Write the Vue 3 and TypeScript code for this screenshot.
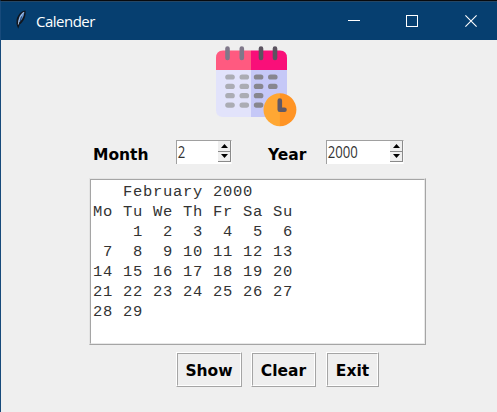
<script setup lang="ts">
import { computed, ref } from 'vue'

const month = ref(2)
const year = ref(2000)
const shown = ref({ month: 2, year: 2000 })

const names = [
  'January', 'February', 'March', 'April', 'May', 'June', 'July',
  'August', 'September', 'October', 'November', 'December',
]

const calendar = computed(() => {
  const { month: m, year: y } = shown.value
  const title = `${names[m - 1]} ${y}`
  const offset = (new Date(y, m - 1, 1).getDay() + 6) % 7
  const count = new Date(y, m, 0).getDate()
  const cells: string[] = Array(offset).fill('  ')
  for (let d = 1; d <= count; d++) cells.push(String(d).padStart(2))
  const lines = [' '.repeat(Math.floor((20 - title.length) / 2)) + title, 'Mo Tu We Th Fr Sa Su']
  for (let i = 0; i < cells.length; i += 7) lines.push(cells.slice(i, i + 7).join(' '))
  return lines.join('\n')
})

const visible = ref(true)

function show() {
  shown.value = { month: month.value, year: year.value }
  visible.value = true
}

function stepMonth(by: number) {
  month.value = Math.min(12, Math.max(1, month.value + by))
}

const columns = [25, 39.3, 53.6, 67.8]
const dots = [39, 48.4, 57.7, 67.1].flatMap((y, row) =>
  columns.slice(0, row < 2 ? 4 : 3).map((x) => ({ x, y })),
)
</script>

<template>
  <div class="window">
    <header class="titlebar">
      <svg class="feather" width="12" height="20" viewBox="0 0 12 20">
        <path d="M10.500 .5C6.500 .5 2.600 5 1.600 9.500L1.500 14L3.200 18.800L4.700 14.500C8.500 12 11.300 6.500 10.500 .5Z" fill="#10151d" />
        <path d="M9.200 1.800C6 3 3.400 7 3.200 13C6.500 11 9.300 6.500 9.200 1.800Z" fill="#6190cd" />
        <path d="M8.800 2.300C6 5 3.800 9 3.300 14.500" fill="none" stroke="#b9cbe2" stroke-width=".9" />
        <path d="M6.500 6.500L5.300 11" stroke="#173963" stroke-width=".9" />
      </svg>
      <h1 class="title">Calender</h1>
      <div class="controls">
        <svg width="12" height="12" viewBox="0 0 12 12"><path d="M0 5.500H12" stroke="#fff" /></svg>
        <svg width="12" height="12" viewBox="0 0 12 12"><rect x=".5" y=".5" width="11" height="11" fill="none" stroke="#fff" /></svg>
        <svg class="close" width="12" height="12" viewBox="0 0 12 12"><path d="M.4 .4L11.600 11.600M11.600 .4L.4 11.600" stroke="#fff" stroke-width="1.100" /></svg>
      </div>
    </header>

    <main class="body">
      <svg class="logo" width="100" height="95" viewBox="0 0 100 95">
        <path d="M11 30H46V79H18Q11 79 11 72Z" fill="#e2e3fb" />
        <path d="M46 30H82V79H46Z" fill="#c5c8f7" />
        <path d="M11 32V20Q11 12.500 18 12.500H46V32Z" fill="#ff5a80" />
        <path d="M46 12.500H75Q82 12.500 82 20V32H46Z" fill="#f90f79" />
        <g stroke-width="4.600" stroke-linecap="round">
          <path d="M22.500 10.500V20M36.800 10.500V20" stroke="#80788a" />
          <path d="M56 10.500V20M70 10.500V20" stroke="#5b5360" />
        </g>
        <rect
          v-for="(dot, i) in dots" :key="i" :x="dot.x - 4.8" :y="dot.y - 2.6"
          width="9.600" height="5.200" rx="2.600" :fill="dot.x < 45 ? '#abacb4' : '#87868f'"
        />
        <path d="M75 55.200A16.500 16.500 0 0 0 75 88.200Z" fill="#ffa733" />
        <path d="M74.900 55.200A16.500 16.500 0 0 1 74.900 88.200Z" fill="#ff9425" />
        <path d="M74.800 62.500V71.800H79.500" fill="none" stroke="#615965" stroke-width="4.600" stroke-linecap="round" stroke-linejoin="round" />
      </svg>

      <div class="fields">
        <span class="label month-label">Month</span>
        <div class="spin month-spin">
          <span class="value">{{ month }}</span>
          <div class="arrows">
            <button @click="stepMonth(1)"><svg width="7" height="4" viewBox="0 0 7 4"><path d="M0 4L3.500 0L7 4Z" /></svg></button>
            <button @click="stepMonth(-1)"><svg width="7" height="4" viewBox="0 0 7 4"><path d="M0 0L3.500 4L7 0Z" /></svg></button>
          </div>
        </div>
        <span class="label year-label">Year</span>
        <div class="spin year-spin">
          <span class="value">{{ year }}</span>
          <div class="arrows">
            <button @click="year++"><svg width="7" height="4" viewBox="0 0 7 4"><path d="M0 4L3.500 0L7 4Z" /></svg></button>
            <button @click="year--"><svg width="7" height="4" viewBox="0 0 7 4"><path d="M0 0L3.500 4L7 0Z" /></svg></button>
          </div>
        </div>
      </div>

      <div class="output"><pre>{{ visible ? calendar : '' }}</pre></div>

      <div class="actions">
        <button class="action show" @click="show"><span>Show</span></button>
        <button class="action clear" @click="visible = false"><span>Clear</span></button>
        <button class="action exit"><span>Exit</span></button>
      </div>
    </main>
  </div>
</template>

<style>
body {
  margin: 0;
  overflow: hidden;
}
</style>

<style scoped>
* {
  box-sizing: border-box;
}

.window {
  width: 497px;
  height: 412px;
  display: flex;
  flex-direction: column;
  background: #efefef;
  border-top: 1px solid #080a0d;
  border-left: 1px solid #174a7b;
}

.titlebar {
  flex: none;
  height: 39px;
  display: flex;
  align-items: center;
  padding: 0 20px 0 14px;
  background: #063f70;
  border-top: 1px solid #254765;
}

.feather {
  margin-top: -2px;
}

.title {
  margin: -1px 0 0 9px;
  font: 400 15px/20px "Open Sans", "Noto Sans", sans-serif;
  letter-spacing: -0.5px;
  color: #fff;
}

.controls {
  margin-left: auto;
  display: flex;
  gap: 46px;
}

.close {
  margin-left: 1px;
}

.body {
  flex: 1;
  display: flex;
  flex-direction: column;
}

.logo {
  flex: none;
  margin: -2px 0 0 204px;
}

.fields {
  display: flex;
  height: 24px;
  margin: 7px 0 0 92px;
}

.label {
  font: 700 15.5px/20px "DejaVu Sans", sans-serif;
  padding-top: 5px;
  color: #000;
  white-space: nowrap;
}

.month-label {
  width: 83px;
}

.year-label {
  width: 58px;
}

.spin {
  height: 24px;
  display: flex;
  justify-content: space-between;
  background: #fff;
  border-top: 1px solid #a0a0a0;
  border-left: 1px solid #a0a0a0;
  border-right: 1px solid #f8f8f8;
}

.month-spin {
  width: 56px;
  margin-right: 36px;
}

.year-spin {
  width: 78px;
}

.value {
  padding-left: 1px;
  font: 400 16px/22px "Open Sans", sans-serif;
  color: #333;
  transform: scaleX(0.82);
  transform-origin: left;
}

.arrows {
  width: 13px;
  height: 21px;
  display: flex;
  flex-direction: column;
}

.arrows button {
  flex: 1;
  min-height: 0;
  display: flex;
  align-items: center;
  justify-content: center;
  padding: 0;
  background: #efefef;
  border: 0;
  border-right: 1px solid #8a8a8a;
  border-bottom: 1px solid #8a8a8a;
}

.output {
  width: 337px;
  height: 167px;
  margin: 14px 0 0 88px;
  background: #fff;
  border: 1px solid;
  border-color: #e4e4e4 #a5a5a5 #a5a5a5 #e4e4e4;
}

.output pre {
  height: 165px;
  margin: 0;
  padding: 2px 0 0 2px;
  border: 1px solid;
  border-color: #a5a5a5 #e8e8e8 #e8e8e8 #a5a5a5;
  font: 400 15.5px/20px "Courier New", "Liberation Mono", monospace;
  letter-spacing: 0.7px;
  color: #333;
}

.actions {
  display: flex;
  margin: 7px 0 0 175px;
}

.action {
  height: 35px;
  padding: 0;
  background: #efefef;
  border: 1px solid;
  border-color: #fff #a5a5a5 #a5a5a5 #fff;
}

.action span {
  display: block;
  height: 33px;
  border: 1px solid;
  border-color: #a5a5a5 #fff #fff #a5a5a5;
  font: 700 15.5px/34px "DejaVu Sans", sans-serif;
  color: #000;
}

.show {
  width: 66px;
}

.clear {
  width: 65px;
  margin-left: 9px;
}

.exit {
  width: 53px;
  margin-left: 10px;
}
</style>
